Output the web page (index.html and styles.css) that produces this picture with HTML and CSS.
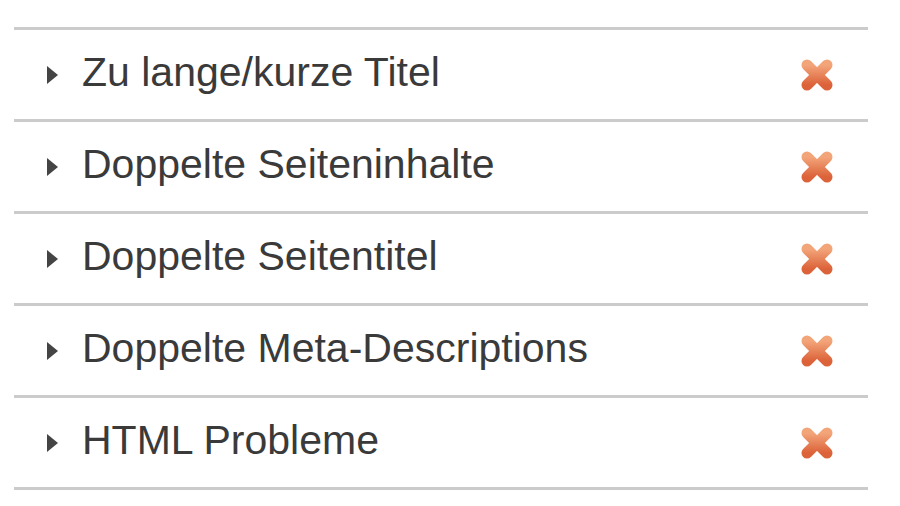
FILE: index.html
```html
<!DOCTYPE html>
<html lang="de">
<head>
    <meta charset="UTF-8">
    <meta name="viewport" content="width=device-width, initial-scale=1.0">
    <title>SEO Probleme</title>
    <link rel="stylesheet" href="styles.css">
</head>
<body>
    <ul class="checks">
        <li class="check">
            <span class="toggle"></span>
            <span class="label">Zu lange/kurze Titel</span>
            <svg class="fail" viewBox="0 0 36 36"><use href="#cross"/></svg>
        </li>
        <li class="check">
            <span class="toggle"></span>
            <span class="label">Doppelte Seiteninhalte</span>
            <svg class="fail" viewBox="0 0 36 36"><use href="#cross"/></svg>
        </li>
        <li class="check">
            <span class="toggle"></span>
            <span class="label">Doppelte Seitentitel</span>
            <svg class="fail" viewBox="0 0 36 36"><use href="#cross"/></svg>
        </li>
        <li class="check">
            <span class="toggle"></span>
            <span class="label">Doppelte Meta-Descriptions</span>
            <svg class="fail" viewBox="0 0 36 36"><use href="#cross"/></svg>
        </li>
        <li class="check">
            <span class="toggle"></span>
            <span class="label">HTML Probleme</span>
            <svg class="fail" viewBox="0 0 36 36"><use href="#cross"/></svg>
        </li>
    </ul>

    <!-- shared icon -->
    <svg width="0" height="0" class="defs">
        <defs>
            <linearGradient id="crossFill" x1="0" y1="0" x2="0" y2="1">
                <stop offset="0" stop-color="#f3a57a"/>
                <stop offset="1" stop-color="#dc6239"/>
            </linearGradient>
            <g id="cross" stroke="url(#crossFill)" stroke-width="11" stroke-linecap="round">
                <line x1="8" y1="8" x2="28" y2="28"/>
                <line x1="28" y1="8" x2="8" y2="28"/>
            </g>
        </defs>
    </svg>
</body>
</html>
```

FILE: styles.css
```css
body {
    margin: 0;
    background: #fff;
    font-family: "Liberation Sans", Arial, sans-serif;
    color: #3a3a3a;
}

.checks {
    list-style: none;
    margin: 27px 32px 0 14px;
    padding: 0;
    border-bottom: 3px solid #cbcbcb;
}

.check {
    display: flex;
    align-items: center;
    height: 89px;
    border-top: 3px solid #cbcbcb;
}

.toggle {
    width: 0;
    height: 0;
    margin: 0 24px 0 33px;
    border-top: 9px solid transparent;
    border-bottom: 9px solid transparent;
    border-left: 11px solid #444;
}

.label {
    flex: 1;
    font-size: 41px;
    line-height: 1;
    padding-bottom: 4px;
}

.fail {
    width: 36px;
    height: 36px;
    margin-right: 33px;
}

.defs {
    position: absolute;
}
```
